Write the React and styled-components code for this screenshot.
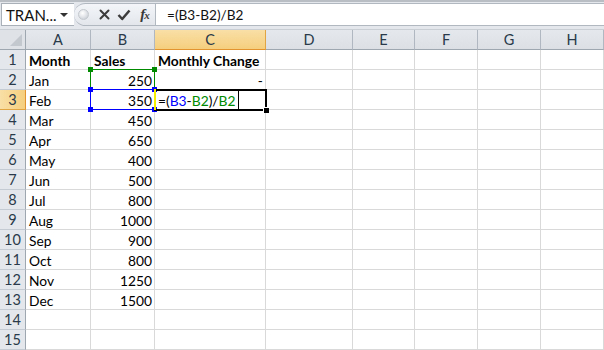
import styled, { createGlobalStyle } from "styled-components";

const GlobalStyle = createGlobalStyle`
  html, body {
    margin: 0;
    padding: 0;
    background: #ffffff;
    overflow: hidden;
  }
  * { box-sizing: border-box; }
`;

const Window = styled.div`
  width: 604px;
  height: 350px;
  overflow: hidden;
  font-family: Lato, "Open Sans", sans-serif;
  background: #ffffff;
`;

const FormulaBar = styled.div`
  height: 29px;
  display: flex;
  align-items: flex-start;
  background: #e4e8ed;
  border-top: 2px solid #b9bec5;
  padding-top: 1px;
`;

const NameBox = styled.div`
  width: 73px;
  height: 23px;
  margin-left: 1px;
  display: flex;
  align-items: center;
  justify-content: space-between;
  padding: 0 6px 0 4px;
  background: #ffffff;
  border: 1px solid #a9b0b8;
  border-right: none;
  font-size: 15px;
  color: #111;
`;

const DropArrow = styled.span`
  width: 0;
  height: 0;
  border-left: 4px solid transparent;
  border-right: 4px solid transparent;
  border-top: 4px solid #333;
`;

const Controls = styled.div`
  width: 81px;
  height: 23px;
  display: flex;
  align-items: center;
  background: linear-gradient(#f3f5f8, #e3e7ec);
  border: 1px solid #b2b8c0;
  border-left: none;
  border-right: none;
  border-radius: 12px 0 0 12px;
  padding-left: 4px;
`;

const Knob = styled.span`
  width: 11px;
  height: 11px;
  border-radius: 50%;
  background: radial-gradient(circle at 40% 35%, #ffffff 0%, #d4d8de 70%, #b9bfc6 100%);
  border: 1px solid #c4c9cf;
  margin-right: 5px;
`;

const IconSlot = styled.span`
  width: ${(p) => p.w}px;
  display: flex;
  align-items: center;
  justify-content: center;
`;

const Fx = styled.span`
  font-family: "Liberation Serif", "DejaVu Serif", serif;
  font-style: italic;
  font-weight: bold;
  font-size: 15px;
  color: #3a3a3a;
  letter-spacing: -1px;
  & small {
    font-size: 11px;
  }
`;

const FormulaInput = styled.div`
  flex: 1;
  height: 23px;
  background: #ffffff;
  border: 1px solid #b2b8c0;
  border-right: none;
  display: flex;
  align-items: center;
  padding-left: 11px;
  font-size: 13.6px;
  color: #111;
`;

const Sheet = styled.div`
  display: grid;
  grid-template-columns: 26px 65px 64px 111px 87px 62px 63px 63px 63px;
  grid-auto-rows: 20px;
  border-top: 1px solid #c9ced5;
`;

const Corner = styled.div`
  position: relative;
  background: #dfe3e8;
  border-right: 1px solid #9ea6b0;
  border-bottom: 1px solid #9ea6b0;
  &::after {
    content: "";
    position: absolute;
    right: 3px;
    bottom: 3px;
    width: 0;
    height: 0;
    border-left: 12px solid transparent;
    border-bottom: 12px solid #c3c8ce;
  }
`;

const ColHead = styled.div`
  display: flex;
  align-items: center;
  justify-content: center;
  font-size: 14.5px;
  color: #2a3a4a;
  background: ${(p) =>
    p.active ? "linear-gradient(#f9dfa6, #f5cf7e)" : "linear-gradient(#e5e8ec, #dce0e5)"};
  border-right: 1px solid ${(p) => (p.active ? "#e2a543" : "#b0b7c0")};
  border-bottom: 1px solid ${(p) => (p.active ? "#e2952f" : "#9ea6b0")};
`;

const RowHead = styled.div`
  display: flex;
  align-items: center;
  justify-content: center;
  font-size: 14.5px;
  color: #2a3a4a;
  background: ${(p) =>
    p.active ? "linear-gradient(90deg, #f9dfa6, #f5cf7e)" : "#e4e7eb"};
  border-right: 1px solid ${(p) => (p.active ? "#e2952f" : "#9ea6b0")};
  border-bottom: 1px solid ${(p) => (p.active ? "#e2a543" : "#c5cbd2")};
`;

const Cell = styled.div`
  position: relative;
  display: flex;
  align-items: center;
  justify-content: ${(p) => (p.right ? "flex-end" : "flex-start")};
  padding: 1px ${(p) => (p.right ? "2px" : "0")} 0 ${(p) => (p.right ? "0" : "3px")};
  font-size: 13.8px;
  font-weight: ${(p) => (p.bold ? 700 : 400)};
  color: #000;
  white-space: nowrap;
  border-right: 1px solid #d9d9d9;
  border-bottom: 1px solid #d9d9d9;
`;

const RangeBox = styled.div`
  position: absolute;
  left: -1px;
  top: -1px;
  right: -1px;
  bottom: -1px;
  border: 1px solid ${(p) => p.color};
  pointer-events: none;
  z-index: ${(p) => p.z};
`;

const Handle = styled.span`
  position: absolute;
  width: 5px;
  height: 5px;
  background: ${(p) => p.color};
  ${(p) => (p.top ? "top: -3px;" : "bottom: -3px;")}
  ${(p) => (p.left ? "left: -3px;" : "right: -3px;")}
`;

const YellowEdge = styled.span`
  position: absolute;
  right: -2px;
  top: -1px;
  bottom: -1px;
  width: 2px;
  background: #f5f000;
  z-index: 4;
`;

const EditBox = styled.div`
  position: absolute;
  left: -1px;
  top: -1px;
  right: -2px;
  bottom: -2px;
  border: 2px solid #000;
  z-index: 3;
  &::after {
    content: "";
    position: absolute;
    right: -4px;
    bottom: -4px;
    width: 5px;
    height: 5px;
    background: #000;
    border-left: 1px solid #fff;
    border-top: 1px solid #fff;
  }
`;

const Ref = styled.span`
  color: ${(p) => p.color};
`;

const Caret = styled.span`
  display: inline-block;
  width: 1px;
  height: 18px;
  background: #000;
  margin-left: 2px;
`;

const months = [
  ["Jan", "250"],
  ["Feb", "350"],
  ["Mar", "450"],
  ["Apr", "650"],
  ["May", "400"],
  ["Jun", "500"],
  ["Jul", "800"],
  ["Aug", "1000"],
  ["Sep", "900"],
  ["Oct", "800"],
  ["Nov", "1250"],
  ["Dec", "1500"],
];

const cols = ["A", "B", "C", "D", "E", "F", "G", "H"];
const GREEN = "#008a00";
const BLUE = "#0000ff";

const Formula = ({ caret }) => (
  <>
    =(<Ref color={BLUE}>B3</Ref>-<Ref color={GREEN}>B2</Ref>)/<Ref color={GREEN}>B2</Ref>
    {caret && <Caret />}
  </>
);

const Empty = ({ n }) =>
  Array.from({ length: n }).map((_, i) => <Cell key={"e" + i} />);

const Corners = ({ color }) => (
  <>
    <Handle color={color} top left />
    <Handle color={color} top />
    <Handle color={color} left />
    <Handle color={color} />
  </>
);

const App = () => {
  const rows = [];
  rows.push(
    <RowHead key="h1">1</RowHead>,
    <Cell key="a1" bold>Month</Cell>,
    <Cell key="b1" bold>Sales</Cell>,
    <Cell key="c1" bold>Monthly Change</Cell>,
    <Empty key="r1" n={5} />
  );

  months.forEach(([m, v], i) => {
    const r = i + 2;
    let cCell = <Cell key={"c" + r} />;
    let bExtra = null;
    if (r === 2) {
      cCell = <Cell key={"c" + r} right>-</Cell>;
      bExtra = (
        <RangeBox color={GREEN} z={1}>
          <Corners color={GREEN} />
        </RangeBox>
      );
    }
    if (r === 3) {
      cCell = (
        <Cell key={"c" + r}>
          <Formula caret />
          <EditBox />
        </Cell>
      );
      bExtra = (
        <>
          <RangeBox color={BLUE} z={2}>
            <Corners color={BLUE} />
          </RangeBox>
          <YellowEdge />
        </>
      );
    }
    rows.push(
      <RowHead key={"h" + r} active={r === 3}>{r}</RowHead>,
      <Cell key={"a" + r}>{m}</Cell>,
      <Cell key={"b" + r} right>
        {v}
        {bExtra}
      </Cell>,
      cCell,
      <Empty key={"r" + r} n={5} />
    );
  });

  [14, 15].forEach((r) => {
    rows.push(
      <RowHead key={"h" + r}>{r}</RowHead>,
      <Empty key={"r" + r} n={8} />
    );
  });

  return (
    <Window>
      <GlobalStyle />
      <FormulaBar>
        <NameBox>
          <span>TRAN...</span>
          <DropArrow />
        </NameBox>
        <Controls>
          <Knob />
          <IconSlot w={20}>
            <svg width="11" height="11" viewBox="0 0 11 11">
              <path d="M1.5 1.5 L9.5 9.5 M9.5 1.5 L1.5 9.5" stroke="#3c3c3c" strokeWidth="2" strokeLinecap="round" />
            </svg>
          </IconSlot>
          <IconSlot w={20}>
            <svg width="14" height="12" viewBox="0 0 14 12">
              <path d="M1.5 6 L5.2 10 L12.5 1.5" stroke="#3c3c3c" strokeWidth="2.5" fill="none" strokeLinejoin="round" />
            </svg>
          </IconSlot>
          <IconSlot w={21}>
            <Fx>
              f<small>x</small>
            </Fx>
          </IconSlot>
        </Controls>
        <FormulaInput>=(B3-B2)/B2</FormulaInput>
      </FormulaBar>
      <Sheet>
        <Corner />
        {cols.map((c) => (
          <ColHead key={c} active={c === "C"}>
            {c}
          </ColHead>
        ))}
        {rows}
      </Sheet>
    </Window>
  );
};

export default App;
